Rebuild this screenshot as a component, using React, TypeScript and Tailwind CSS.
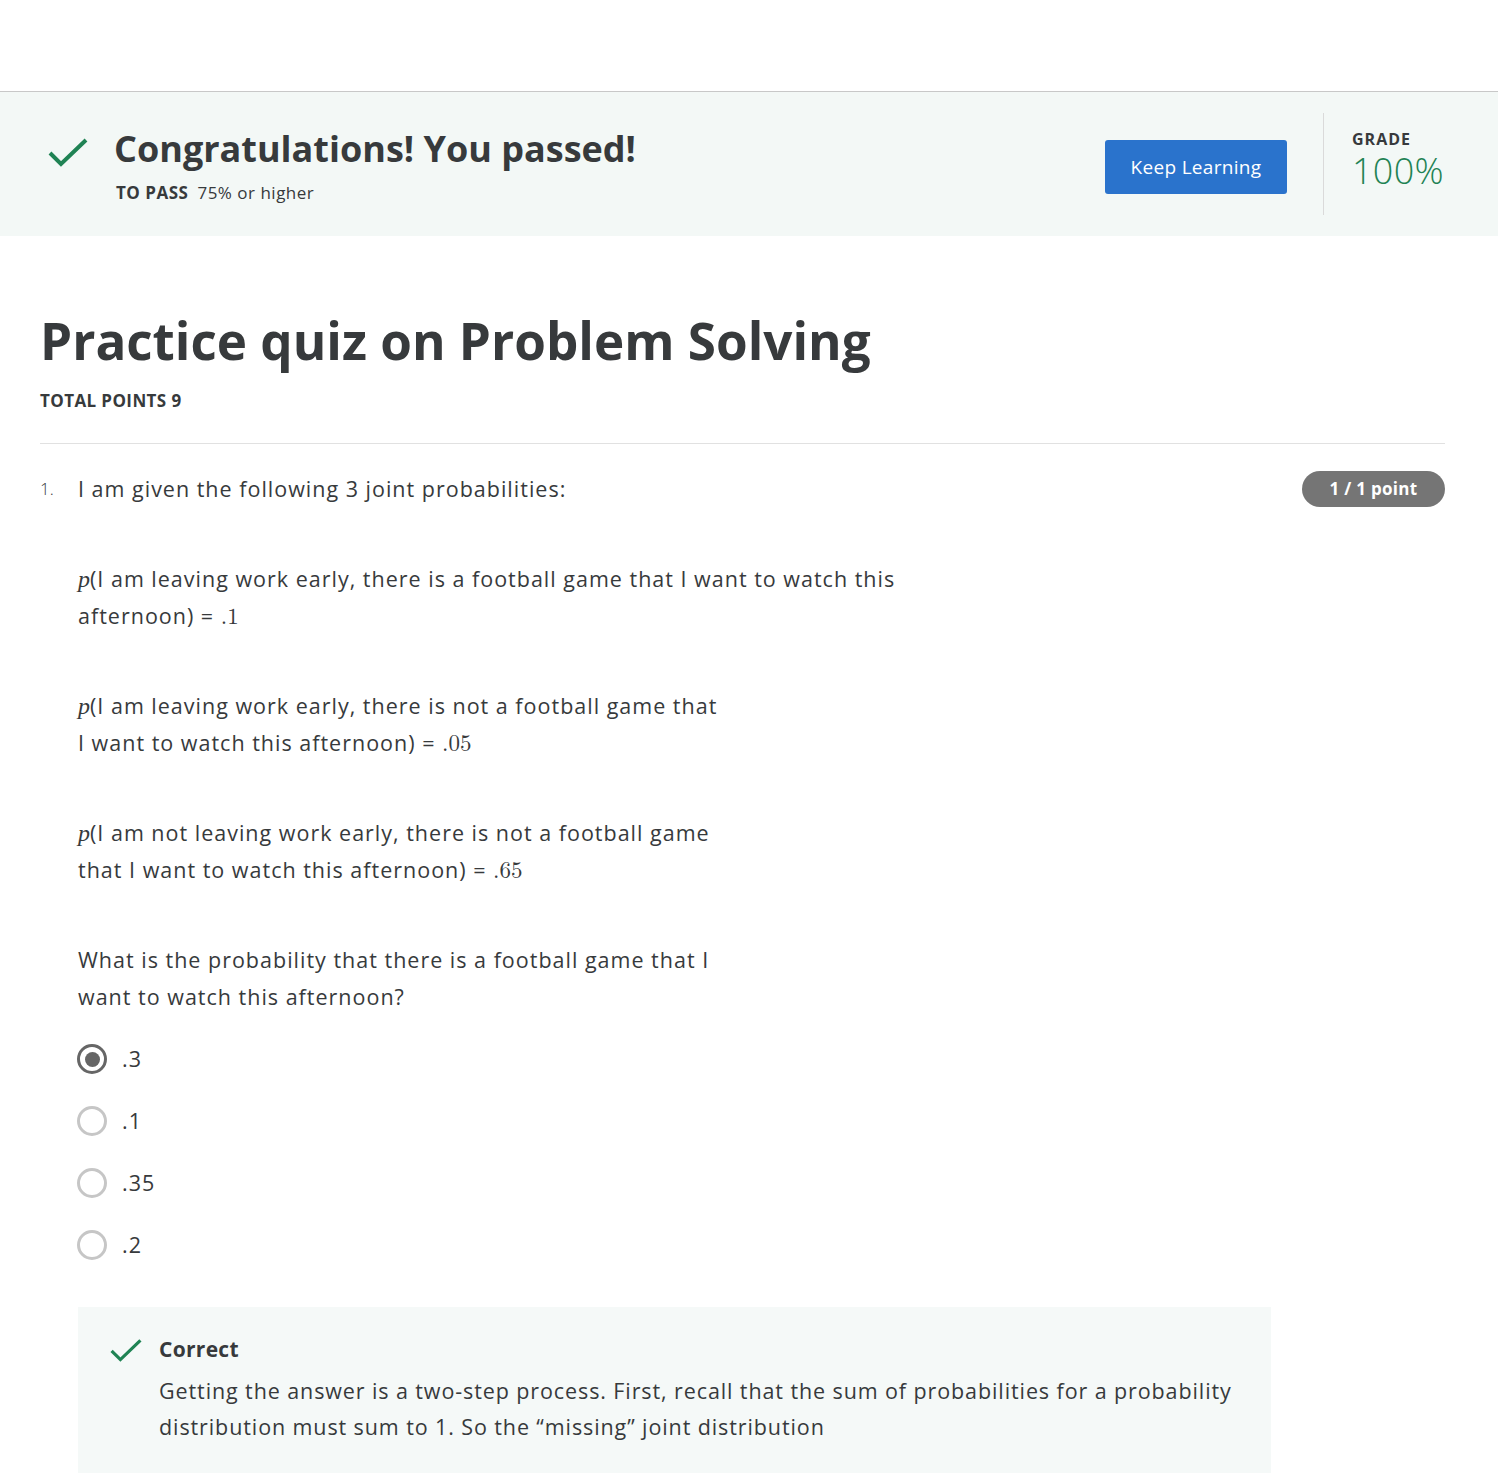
import React from "react";

const Check = ({ className }: { className?: string }) => (
  <svg viewBox="0 0 40 30" className={className} fill="none">
    <path d="M2 16 L13 27 L38 3" stroke="#1f8354" strokeWidth="4" strokeLinecap="butt" strokeLinejoin="miter" />
  </svg>
);

const M = ({ children }: { children: React.ReactNode }) => (
  <span className="text-[23px] leading-none tracking-normal" style={{ fontFamily: '"Latin Modern Math","DejaVu Serif","Liberation Serif",serif' }}>
    {children}
  </span>
);

const P = () => (
  <span className="italic text-[24px] leading-none tracking-normal" style={{ fontFamily: '"Liberation Serif","DejaVu Serif",serif' }}>
    p
  </span>
);

const Radio = ({ selected, label }: { selected?: boolean; label: string }) => (
  <div className="flex items-center h-[62px]">
    {selected ? (
      <div className="w-[30px] h-[30px] rounded-full border-[3px] border-[#666666] flex items-center justify-center">
        <div className="w-[15px] h-[15px] rounded-full bg-[#666666]" />
      </div>
    ) : (
      <div className="w-[30px] h-[30px] rounded-full border-[3px] border-[#c6c6c6]" />
    )}
    <span className="ml-[15px] text-[21.5px] tracking-[1px] text-[#373a3c]">{label}</span>
  </div>
);

export default function App() {
  return (
    <div className="w-full min-h-[1473px] bg-white text-[#373a3c]" style={{ fontFamily: '"Open Sans","Noto Sans",sans-serif' }}>
      <div className="h-[92px] border-b border-[#c8c8c8]" />
      <div className="h-[144px] bg-[#f3f8f6] flex items-center">
        <div className="pl-[48px] pr-[20px] self-start pt-[45px]">
          <Check className="w-[40px] h-[30px]" />
        </div>
        <div className="ml-[6px] flex flex-col pt-[4px]">
          <div className="text-[36px] font-bold leading-[44px]">Congratulations! You passed!</div>
          <div className="mt-[10px] text-[17px] leading-[24px] ml-[2px] tracking-[0.5px]">
            <span className="font-bold">TO PASS</span>
            <span className="ml-[9px]">75% or higher</span>
          </div>
        </div>
        <div className="flex-1" />
        <button className="mt-[6px] w-[182px] h-[54px] bg-[#2a73cc] rounded-[3px] text-white text-[19px] font-normal tracking-[0.3px]">Keep Learning</button>
        <div className="ml-[36px] h-[102px] border-l border-[#dadada]" />
        <div className="pl-[28px] w-[174px] flex flex-col -mt-[6px]">
          <div className="text-[16px] font-bold tracking-[1px] leading-[18px]">GRADE</div>
          <div className="mt-[2px] text-[36px] font-light text-[#1f8354] leading-[42px] tracking-[0.3px]">100%</div>
        </div>
      </div>

      <div className="pl-[40px] pr-[53px]">
        <h1 className="mt-[72px] text-[51.2px] font-bold leading-[64px]">Practice quiz on Problem Solving</h1>
        <div className="mt-[17px] text-[17px] font-bold leading-[24px] tracking-[0.4px]">TOTAL POINTS 9</div>
        <div className="mt-[30px] border-t border-[#e1e1e1]" />

        <div className="mt-[27px] flex">
          <div className="w-[38px] text-[17px] font-light leading-[36px]">1.</div>
          <div className="flex-1">
            <div className="flex items-center justify-between">
              <div className="text-[21.5px] tracking-[1px] leading-[36px]">I am given the following 3 joint probabilities:</div>
              <div className="h-[36px] w-[143px] rounded-full bg-[#757575] text-white font-bold text-[17px] tracking-[0.3px] flex items-center justify-center">1 / 1 point</div>
            </div>
            <div className="mt-[53px] text-[21.5px] tracking-[1px] leading-[37px]">
              <p>
                <P />(I am leaving work early, there is a football game that I want to watch this
                <br />
                afternoon) = <M>.1</M>
              </p>
              <p className="mt-[53px]">
                <P />(I am leaving work early, there is not a football game that
                <br />I want to watch this afternoon) = <M>.05</M>
              </p>
              <p className="mt-[53px]">
                <P />(I am not leaving work early, there is not a football game
                <br />
                that I want to watch this afternoon) = <M>.65</M>
              </p>
              <p className="mt-[53px]">
                What is the probability that there is a football game that I
                <br />
                want to watch this afternoon?
              </p>
            </div>
            <div className="mt-[13px] -ml-[1px]">
              <Radio selected label=".3" />
              <Radio label=".1" />
              <Radio label=".35" />
              <Radio label=".2" />
            </div>
            <div className="mt-[31px] w-[1193px] bg-[#f5f9f8] pl-[32px] pt-[28px] pb-[30px] flex">
              <Check className="w-[32px] h-[24px] mt-[3px]" />
              <div className="ml-[17px]">
                <div className="text-[21px] font-bold leading-[28px] tracking-[0.3px]">Correct</div>
                <div className="mt-[10px] text-[21.5px] tracking-[0.9px] leading-[36px]">
                  Getting the answer is a two-step process. First, recall that the sum of probabilities for a probability
                  <br />
                  distribution must sum to 1. So the “missing” joint distribution
                </div>
              </div>
            </div>
          </div>
        </div>
      </div>
    </div>
  );
}
